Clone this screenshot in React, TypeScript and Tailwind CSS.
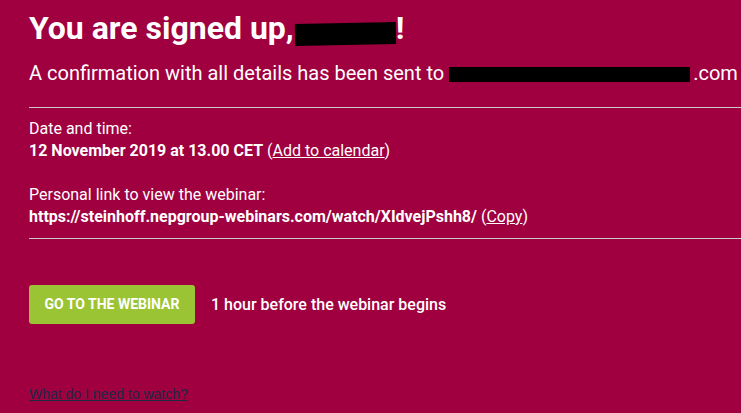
export default function App() {
  return (
    <div className="min-h-[413px] w-full overflow-hidden bg-[#a0003f] pl-[29px] pt-[9px] text-white font-['Roboto',sans-serif]">
      <h1 className="whitespace-nowrap text-[32px] font-bold leading-[38px]">
        You are signed up,
        <span className="ml-[1px] inline-block h-[22px] w-[101px] rotate-[-1deg] bg-black align-[-6px]" />
        !
      </h1>
      <p className="mt-[13px] whitespace-nowrap text-[20px] leading-[26px]">
        A confirmation with all details has been sent to{' '}
        <span className="inline-block h-[15px] w-[241px] bg-black align-[-2px]" />
        <span className="ml-[3px]">.com</span>
      </p>

      <div className="mt-[21px] h-px bg-[#cccccc]" />

      <div className="mt-[10px] text-[16px] leading-[22px]">
        <p>Date and time:</p>
        <p>
          <span className="font-bold">12 November 2019 at 13.00 CET</span>{' '}
          (<a href="#" className="underline">Add to calendar</a>)
        </p>
        <p className="mt-[22px]">Personal link to view the webinar:</p>
        <p>
          <span className="font-bold">https://steinhoff.nepgroup-webinars.com/watch/XIdvejPshh8/</span>{' '}
          (<a href="#" className="underline">Copy</a>)
        </p>
      </div>

      <div className="mt-[10px] h-px bg-[#cccccc]" />

      <div className="mt-[46px] flex items-center gap-[16px]">
        <button className="h-[39px] w-[166px] rounded-[3px] bg-[#9bc434] text-[14px] font-bold uppercase text-white">
          Go to the webinar
        </button>
        <span className="text-[16px] font-medium">1 hour before the webinar begins</span>
      </div>

      <a
        href="#"
        className="mt-[60px] block w-fit text-[14px] leading-[20px] text-[#1c2a44] underline font-['Liberation_Sans',Arial,sans-serif]"
      >
        What do I need to watch?
      </a>
    </div>
  );
}
